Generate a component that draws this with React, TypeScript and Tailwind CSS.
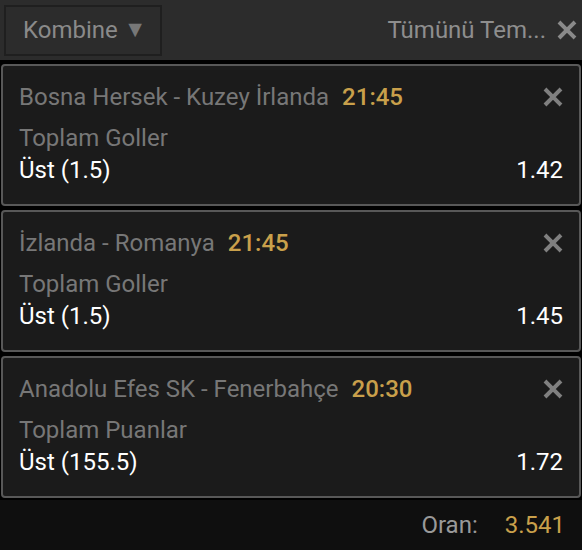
const bets = [
  { match: "Bosna Hersek - Kuzey İrlanda", time: "21:45", market: "Toplam Goller", pick: "Üst (1.5)", odd: "1.42" },
  { match: "İzlanda - Romanya", time: "21:45", market: "Toplam Goller", pick: "Üst (1.5)", odd: "1.45" },
  { match: "Anadolu Efes SK - Fenerbahçe", time: "20:30", market: "Toplam Puanlar", pick: "Üst (155.5)", odd: "1.72" },
];

const Close = ({ className }: { className: string }) => (
  <svg viewBox="0 0 20 20" className={className} fill="none" stroke="currentColor" strokeWidth={3.6} strokeLinecap="square">
    <path d="M4 4 L16 16 M16 4 L4 16" />
  </svg>
);

export default function App() {
  return (
    <div className="w-[582px] h-[550px] bg-black flex flex-col font-['Roboto',sans-serif] text-[24px] overflow-hidden">
      <div className="h-[60px] bg-[#2c2c2c] flex items-center justify-between pl-[4px] pr-[4px] shrink-0">
        <div className="w-[158px] h-[51px] border-2 border-[#1f1f1f] flex items-center pl-[17px] gap-[6px] text-[#8a8a8a]">
          <span>Kombine</span>
          <span className="text-[#777] text-[23px]">▼</span>
        </div>
        <div className="flex items-center gap-[10px] text-[#8e8e8e]">
          <span>Tümünü Tem...</span>
          <Close className="w-[22px] h-[22px] text-[#8a8a8a]" />
        </div>
      </div>
      <div className="flex flex-col gap-[4px] pt-[4px] px-[1px]">
        {bets.map((b) => (
          <div key={b.match} className="h-[142px] bg-[#1b1b1b] border-2 border-[#585858] rounded-[4px] pl-[16px] pr-[16px] pt-[15px] flex flex-col">
            <div className="flex items-center justify-between h-[32px]">
              <div className="flex items-center gap-[13px]">
                <span className="text-[#777]">{b.match}</span>
                <span className="text-[#c9a04b] font-medium">{b.time}</span>
              </div>
              <Close className="w-[22px] h-[22px] text-[#808080] mr-[-1px]" />
            </div>
            <div className="text-[#777] mt-[9px] leading-[32px]">{b.market}</div>
            <div className="flex justify-between text-white leading-[32px]">
              <span>{b.pick}</span>
              <span>{b.odd}</span>
            </div>
          </div>
        ))}
      </div>
      <div className="flex-1 mt-[2px] bg-[#0f0f0f] flex items-center justify-end pr-[17px] gap-[27px]">
        <span className="text-[#999]">Oran:</span>
        <span className="text-[#c9a04b]">3.541</span>
      </div>
    </div>
  );
}
